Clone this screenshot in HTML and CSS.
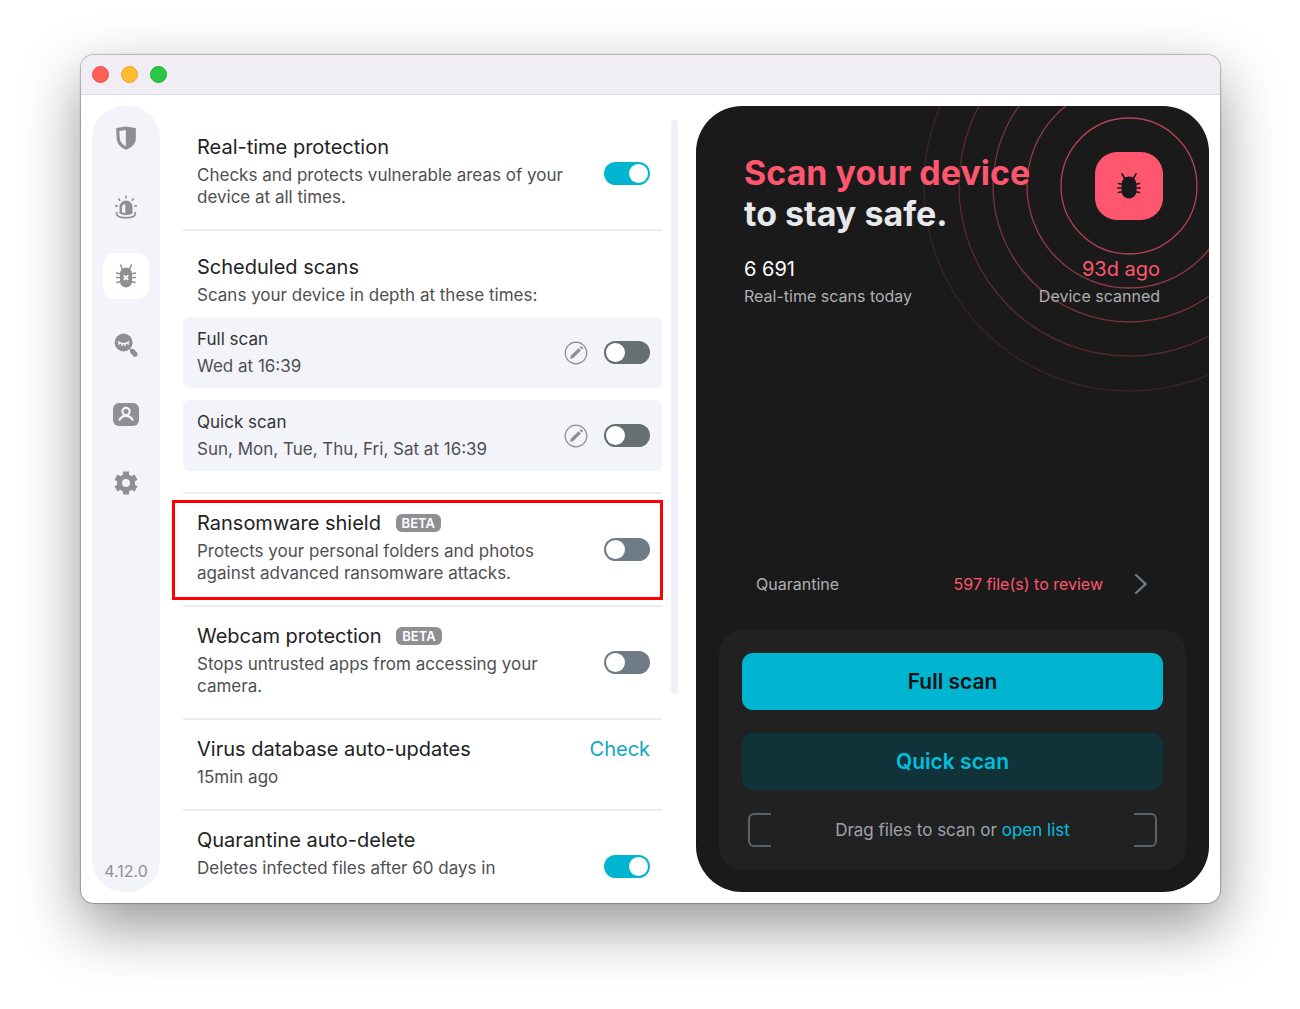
FILE: index.html
```html
<!DOCTYPE html>
<html lang="en">
<head>
    <meta charset="UTF-8">
    <meta name="viewport" content="width=device-width, initial-scale=1.0">
    <title>Antivirus</title>
    <link rel="stylesheet" href="styles.css">
</head>
<body>
    <div class="window">
        <header class="titlebar">
            <button class="dot dot-close" aria-label="Close"></button>
            <button class="dot dot-minimize" aria-label="Minimize"></button>
            <button class="dot dot-zoom" aria-label="Zoom"></button>
        </header>

        <div class="content">
            <nav class="sidebar">
                <button class="nav-item" aria-label="Overview">
                    <svg width="26" height="26" viewBox="0 0 26 26">
                        <path d="M13 1.500L22.800 3v10.500c0 5.500-3.800 8.800-9.800 11.200C7 22.300 4.200 19 3.600 13.500L3.200 3z" fill="#8e8e93"/>
                        <path d="M12.800 5v16.200c-3.600-1.700-5.600-4-6-7.700L6.300 6z" fill="#f3f4f9"/>
                    </svg>
                </button>
                <button class="nav-item" aria-label="Alerts">
                    <svg width="26" height="26" viewBox="0 0 26 26">
                        <path d="M6.500 19.500V13a6.500 6.500 0 0 1 13 0v6.500q-6.500 3-13 0z" fill="#8e8e93"/>
                        <path d="M12.300 10v9q-2.200 0-3.300-.7V13.500q.2-3 3.300-3.500z" fill="#f3f4f9"/>
                        <path d="M4.500 18.200c-2.500 1.800-.5 5.600 8.500 5.600s11-3.800 8.500-5.600M13 1.500v3M5.200 4.500l2 2.300M20.800 4.500l-2 2.300M2 12h3M21 12h3" fill="none" stroke="#8e8e93" stroke-width="1.600"/>
                    </svg>
                </button>
                <button class="nav-item active" aria-label="Antivirus">
                    <svg width="26" height="26" viewBox="0 0 26 26">
                        <rect x="7" y="4.500" width="12" height="20" rx="6" fill="#8e8e93"/>
                        <path d="M7.500 2l2.500 5M18.500 2L16 7M3.500 10l4.500 1M22.500 10l-4.500 1M3.500 14.500h5M17.500 14.500h5M4 19.500l4.500-1M22 19.500l-4.500-1" stroke="#8e8e93" stroke-width="1.500" stroke-linecap="round"/>
                        <path d="M10.800 12.400l4.400 4.400M15.200 12.400l-4.400 4.400" stroke="#fff" stroke-width="1.800"/>
                    </svg>
                </button>
                <button class="nav-item" aria-label="Private search">
                    <svg width="26" height="26" viewBox="0 0 26 26">
                        <circle cx="10.600" cy="10.500" r="9" fill="#8e8e93"/>
                        <path d="M17 17l1.500 1.500" stroke="#8e8e93" stroke-width="2"/>
                        <path d="M19.500 19.500l2.600 2.800" stroke="#8e8e93" stroke-width="5" stroke-linecap="round"/>
                        <path d="M5 9.500q5.600 4.500 11.200 0M6.500 11l-1 1.700M9.200 12l-.3 1.900M12 12l.3 1.900M14.600 11l1 1.700" fill="none" stroke="#f3f4f9" stroke-width="1.500"/>
                    </svg>
                </button>
                <button class="nav-item" aria-label="Identity">
                    <svg width="26" height="26" viewBox="0 0 26 26">
                        <rect y="2" width="26" height="23" rx="6" fill="#8e8e93"/>
                        <circle cx="13" cy="10.500" r="3.600" fill="none" stroke="#f3f4f9" stroke-width="2.200"/>
                        <path d="M6 19.500c1.500-3 4-4.600 7-4.600s5.500 1.600 7 4.600" fill="none" stroke="#f3f4f9" stroke-width="2.200"/>
                    </svg>
                </button>
                <button class="nav-item" aria-label="Settings">
                    <svg width="26" height="26" viewBox="0 0 26 26">
                        <circle cx="13" cy="13" r="6.500" fill="none" stroke="#8e8e93" stroke-width="5"/>
                        <g stroke="#8e8e93" stroke-width="6">
                            <path d="M13 1.500v4M13 20.500v4M3 7.200l3.400 2M19.600 16.800l3.400 2M3 18.800l3.400-2M19.600 9.200l3.400-2"/>
                        </g>
                    </svg>
                </button>
                <span class="version">4.12.0</span>
            </nav>

            <main class="settings">
                <div class="settings-list">
                    <section class="setting">
                        <div class="setting-text with-toggle">
                            <h2><label for="realtime">Real-time protection</label></h2>
                            <p>Checks and protects vulnerable areas of your device at all times.</p>
                        </div>
                        <input type="checkbox" class="toggle" id="realtime" checked>
                    </section>

                    <section class="setting scheduled">
                        <div class="setting-text">
                            <h2>Scheduled scans</h2>
                            <p>Scans your device in depth at these times:</p>
                        </div>
                        <div class="scan-card">
                            <div class="scan-info">
                                <label for="full">Full scan</label>
                                <p>Wed at 16:39</p>
                            </div>
                            <button class="edit" aria-label="Edit full scan">
                                <svg width="24" height="24" viewBox="0 0 24 24">
                                    <circle cx="12" cy="12" r="10.800" fill="none" stroke="#8e8e93" stroke-width="1.200"/>
                                    <path d="M6 18l1-3.500 7.500-7.300 2.400 2.400L9.400 17zM15.600 6.200L17 5l2.200 2.200-1.300 1.400z" fill="#8e8e93"/>
                                </svg>
                            </button>
                            <input type="checkbox" class="toggle toggle-scan" id="full">
                        </div>
                        <div class="scan-card">
                            <div class="scan-info">
                                <label for="quick">Quick scan</label>
                                <p>Sun, Mon, Tue, Thu, Fri, Sat at 16:39</p>
                            </div>
                            <button class="edit" aria-label="Edit quick scan">
                                <svg width="24" height="24" viewBox="0 0 24 24">
                                    <circle cx="12" cy="12" r="10.800" fill="none" stroke="#8e8e93" stroke-width="1.200"/>
                                    <path d="M6 18l1-3.500 7.500-7.300 2.400 2.400L9.400 17zM15.600 6.200L17 5l2.200 2.200-1.300 1.400z" fill="#8e8e93"/>
                                </svg>
                            </button>
                            <input type="checkbox" class="toggle toggle-scan" id="quick">
                        </div>
                    </section>

                    <section class="setting highlighted">
                        <div class="setting-text with-toggle">
                            <h2><label for="ransomware">Ransomware shield</label> <span class="beta">BETA</span></h2>
                            <p>Protects your personal folders and photos against advanced ransomware attacks.</p>
                        </div>
                        <input type="checkbox" class="toggle" id="ransomware">
                    </section>

                    <section class="setting">
                        <div class="setting-text with-toggle">
                            <h2><label for="webcam">Webcam protection</label> <span class="beta">BETA</span></h2>
                            <p>Stops untrusted apps from accessing your camera.</p>
                        </div>
                        <input type="checkbox" class="toggle" id="webcam">
                    </section>

                    <section class="setting">
                        <div class="setting-text">
                            <h2>Virus database auto-updates</h2>
                            <p>15min ago</p>
                        </div>
                        <a href="#" class="check">Check</a>
                    </section>

                    <section class="setting">
                        <div class="setting-text with-toggle">
                            <h2><label for="autodelete">Quarantine auto-delete</label></h2>
                            <p>Deletes infected files after 60 days in</p>
                        </div>
                        <input type="checkbox" class="toggle" id="autodelete" checked>
                    </section>
                </div>
                <div class="scrollbar"></div>
            </main>

            <aside class="panel">
                <svg class="rings" width="412" height="412" viewBox="0 0 412 412" fill="none" stroke="#ff5670" stroke-width="1.300">
                    <circle cx="206" cy="206" r="68" opacity=".68"/>
                    <circle cx="206" cy="206" r="102" opacity=".54"/>
                    <circle cx="206" cy="206" r="136" opacity=".42"/>
                    <circle cx="206" cy="206" r="170" opacity=".28"/>
                    <circle cx="206" cy="206" r="205" opacity=".14"/>
                </svg>

                <div class="hero">
                    <h1><span>Scan your device</span><br>to stay safe.</h1>
                    <div class="bug-badge">
                        <svg width="26" height="28" viewBox="0 0 26 28">
                            <rect x="5.500" y="4.500" width="15" height="22" rx="7.500" fill="#1a1a1a"/>
                            <path d="M6 2l3 5M20 2l-3 5M2.500 11.500l5 1M23.500 11.500l-5 1M2 16h6M24 16h-6M2.500 20.500l5-1M23.500 20.500l-5-1" stroke="#1a1a1a" stroke-width="1.700" stroke-linecap="round"/>
                        </svg>
                    </div>
                </div>

                <div class="stats">
                    <div class="stat">
                        <strong>6 691</strong>
                        <span>Real-time scans today</span>
                    </div>
                    <div class="stat stat-right">
                        <strong>93d ago</strong>
                        <span>Device scanned</span>
                    </div>
                </div>

                <a href="#" class="quarantine">
                    <span>Quarantine</span>
                    <span class="review">597 file(s) to review</span>
                    <svg width="14" height="22" viewBox="0 0 14 22" fill="none" stroke="#6f7a84" stroke-width="2.400" stroke-linecap="round">
                        <path d="M2 2l9.500 9L2 20"/>
                    </svg>
                </a>

                <div class="actions">
                    <button class="btn btn-full">Full scan</button>
                    <button class="btn btn-quick">Quick scan</button>
                    <div class="drop">
                        <span class="bracket"></span>
                        <p>Drag files to scan or <a href="#">open list</a></p>
                        <span class="bracket bracket-right"></span>
                    </div>
                </div>
            </aside>
        </div>
    </div>
</body>
</html>
```
FILE: styles.css
```css
:root {
    --accent: #00b5d0;
    --red: #ff5670;
    --gray: #8e8e93;
    --light: #f3f4f9;
    --line: #ececf2;
    --dark: #1a1a1a;
}

* {
    margin: 0;
    padding: 0;
    box-sizing: border-box;
}

body {
    font-family: Inter, 'Liberation Sans', sans-serif;
    font-size: 17px;
    line-height: 22px;
    color: #4f4f52;
    background-color: #fff;
    padding: 55px 80px 105px 81px;
}

button {
    border: none;
    background: none;
    font-family: inherit;
    cursor: pointer;
}

a {
    text-decoration: none;
}

.window {
    display: flex;
    flex-direction: column;
    height: calc(100vh - 161px);
    min-height: 640px;
    background: #fff;
    border-radius: 13px;
    box-shadow: 0 0 1px 1px rgba(0, 0, 0, 0.25), 0 23px 60px rgba(0, 0, 0, 0.42);
    overflow: hidden;
}

.titlebar {
    display: flex;
    align-items: center;
    gap: 12px;
    flex: 0 0 40px;
    padding: 0 11px;
    background: #f0edf4;
    border-bottom: 1px solid #dedce2;
}

.dot {
    width: 17px;
    height: 17px;
    border-radius: 50%;
}

.dot-close {
    background: #ff5f57;
    border: 1px solid #e9524a;
}

.dot-minimize {
    background: #febc2e;
    border: 1px solid #e5a629;
}

.dot-zoom {
    background: #28c840;
    border: 1px solid #20b035;
}

.content {
    flex: 1;
    min-height: 0;
    display: grid;
    grid-template-columns: 68px minmax(0, 1.045fr) minmax(0, 1fr);
    padding: 11px;
}

/* Sidebar */
.sidebar {
    display: flex;
    flex-direction: column;
    align-items: center;
    gap: 23px;
    padding: 9px 0 10px;
    background: var(--light);
    border-radius: 32px;
}

.nav-item {
    width: 46px;
    height: 46px;
    border-radius: 12px;
}

.nav-item svg,
.edit svg {
    display: block;
    margin: auto;
}

.nav-item.active {
    background: #fff;
}

.version {
    margin-top: auto;
    font-size: 16px;
    color: var(--gray);
}

/* Settings list */
.settings {
    display: flex;
    gap: 8px;
    min-height: 0;
    padding: 0 18px 10px 12px;
}

.settings-list {
    flex: 1;
    padding: 12px 1px 0 11px;
    overflow: hidden;
}

.scrollbar {
    flex: 0 0 7px;
    height: 574px;
    margin-top: 14px;
    border-radius: 4px;
    background: #f0f0f6;
}

.setting {
    display: flex;
    align-items: center;
    justify-content: space-between;
    padding: 0 12px 0 14px;
    border-bottom: 2px solid var(--line);
}

.setting:last-child {
    border-bottom: none;
}

.setting-text {
    max-width: 374px;
    padding: 15px 0 21px;
}

.with-toggle p {
    min-height: 44px;
}

h2 {
    margin-bottom: 3px;
    font-size: 20px;
    line-height: 28px;
    font-weight: 400;
    color: #222224;
}

.beta {
    display: inline-block;
    margin-left: 9px;
    padding: 0 6px;
    border-radius: 6px;
    background: var(--gray);
    color: #fff;
    font-size: 13px;
    line-height: 18px;
    font-weight: 600;
    vertical-align: 2px;
}

.scheduled {
    display: block;
    padding: 7px 0 21px;
}

.scheduled .setting-text {
    padding: 15px 14px 11px;
}

.scan-card {
    display: flex;
    align-items: center;
    gap: 16px;
    padding: 11px 12px 11px 14px;
    border-radius: 6px;
    background: var(--light);
}

.scan-card + .scan-card {
    margin-top: 12px;
}

.scan-info {
    flex: 1;
}

.scan-info label {
    display: block;
    margin-bottom: 5px;
    color: #333336;
}

.toggle {
    appearance: none;
    flex: 0 0 46px;
    height: 23px;
    padding: 2px;
    border-radius: 12px;
    background: #6f7c88;
    cursor: pointer;
}

.toggle::before {
    content: '';
    display: block;
    width: 19px;
    height: 19px;
    border-radius: 50%;
    background: #fff;
}

.toggle:checked {
    background: var(--accent);
}

.toggle:checked::before {
    margin-left: auto;
}

.toggle-scan {
    background: #667071;
}

.check {
    align-self: flex-start;
    padding-top: 15px;
    font-size: 20px;
    line-height: 28px;
    color: #0fa6bf;
}

.highlighted {
    position: relative;
}

.highlighted::after {
    content: '';
    position: absolute;
    inset: 6px -1px 5px -11px;
    border: 3px solid #f00;
    pointer-events: none;
}

/* Dark panel */
.panel {
    position: relative;
    display: flex;
    flex-direction: column;
    padding: 46px 23px 22px;
    border-radius: 46px;
    background: var(--dark);
    color: #b0b0b4;
    font-size: 16px;
    overflow: hidden;
}

.rings {
    position: absolute;
    top: -126px;
    right: -126px;
}

.hero,
.stats {
    position: relative;
    display: flex;
    justify-content: space-between;
    padding: 0 23px 0 25px;
}

h1 {
    font-size: 34px;
    line-height: 41px;
    font-weight: 700;
    color: #e8e8ed;
}

h1 span {
    color: var(--red);
}

.bug-badge {
    display: flex;
    align-items: center;
    justify-content: center;
    width: 68px;
    height: 68px;
    border-radius: 22px;
    background: var(--red);
}

.stats {
    margin-top: 21px;
    padding-right: 26px;
}

.stat strong {
    display: block;
    margin-bottom: 2px;
    font-size: 20px;
    line-height: 28px;
    font-weight: 400;
    color: #fff;
}

.stat-right {
    text-align: right;
}

.stat-right strong {
    color: var(--red);
}

.quarantine {
    display: flex;
    align-items: center;
    margin: auto 38px 35px 37px;
    color: #b0b0b4;
}

.review {
    margin: 0 31px 0 auto;
    color: var(--red);
}

.actions {
    display: flex;
    flex-direction: column;
    gap: 23px;
    padding: 23px;
    border-radius: 23px;
    background: #212121;
}

.btn {
    height: 57px;
    border-radius: 11px;
    font-size: 21px;
    font-weight: 600;
}

.btn-full {
    background: var(--accent);
    color: #111;
}

.btn-quick {
    background: #0f3338;
    color: #00c0de;
}

.drop {
    display: flex;
    align-items: center;
    justify-content: space-between;
    padding: 0 6px;
    font-size: 17px;
    color: #a0a3aa;
}

.drop a {
    color: #00c0de;
}

.bracket {
    width: 23px;
    height: 34px;
    border: 2px solid #56626c;
    border-right: none;
    border-radius: 6px 0 0 6px;
}

.bracket-right {
    border-right: 2px solid #56626c;
    border-left: none;
    border-radius: 0 6px 6px 0;
}
```
